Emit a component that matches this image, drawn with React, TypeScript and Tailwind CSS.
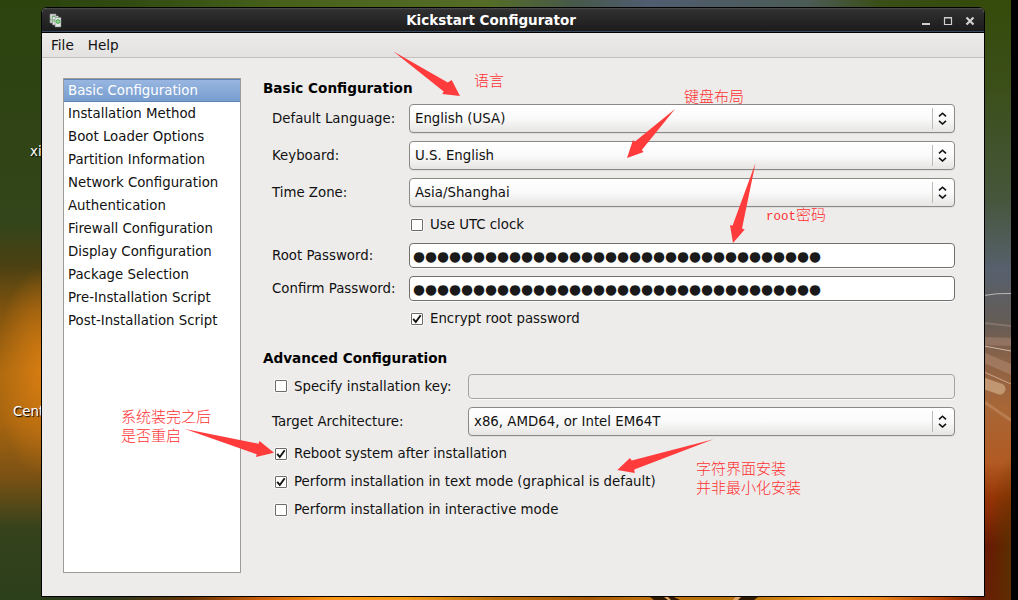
import type { ReactNode } from 'react';

const sections = [
  'Basic Configuration', 'Installation Method', 'Boot Loader Options', 'Partition Information',
  'Network Configuration', 'Authentication', 'Firewall Configuration', 'Display Configuration',
  'Package Selection', 'Pre-Installation Script', 'Post-Installation Script',
];

function Combo({ value }: { value: string }) {
  return (
    <div className="flex h-[29px] min-w-0 flex-1 items-center rounded-[4px] border border-[#8b8985] bg-linear-to-b from-white from-0% via-[#fafafa] via-50% to-[#e6e5e3] pl-[5px] shadow-[0_1px_0_#dedddb]">
      <span className="flex-1">{value}</span>
      <span className="flex h-[21px] w-[22px] items-center justify-center border-l border-[#bcbab7] pr-[2px]">
        <svg width="9" height="13" viewBox="0 0 9 13" fill="none" stroke="#111" strokeWidth="1.6">
          <path d="M1 4.3 4.5 1.2 8 4.3M1 8.9 4.5 12 8 8.9" />
        </svg>
      </span>
    </div>
  );
}

function Entry({ value = '', disabled = false }: { value?: string; disabled?: boolean }) {
  return (
    <div
      className={
        disabled
          ? 'flex h-[25px] flex-1 rounded-[4px] border border-[#a5a3a0] bg-[#edeceb] shadow-[0_1px_0_#fafafa]'
          : 'flex h-[25px] flex-1 items-center overflow-hidden rounded-[4px] border border-[#72706d] bg-white pt-[2px] pl-[3px] text-[13.75px] leading-[21px] text-[#1a1a1a] shadow-[0_1px_0_#fafafa]'
      }
    >
      {value}
    </div>
  );
}

function Check({ label, checked = false }: { label: string; checked?: boolean }) {
  return (
    <label className="flex h-5 items-center">
      <span className="mr-[7px] mb-px flex size-3 shrink-0 items-center justify-center rounded-[1px] border border-[#6d6b68] bg-white shadow-[0_0_0_1px_#f8f7f6]">
        {checked && (
          <svg width="10" height="10" viewBox="0 0 10 10" fill="none" stroke="#111" strokeWidth="1.9">
            <path d="M1.2 4.8 3.8 8 8.7 1.2" />
          </svg>
        )}
      </span>
      <span className="pb-px">{label}</span>
    </label>
  );
}

function Row({ label, children }: { label: string; children: ReactNode }) {
  return (
    <div className="flex items-center">
      <span className="w-[146px] shrink-0 pl-[9px]">{label}</span>
      {children}
    </div>
  );
}

function Wallpaper() {
  return (
    <svg className="absolute inset-0" width="1018" height="600">
      <defs>
        <linearGradient id="top">
          <stop offset="0" stopColor="#2c430e" />
          <stop offset=".12" stopColor="#304a12" />
          <stop offset=".28" stopColor="#47611b" />
          <stop offset=".48" stopColor="#556d26" />
          <stop offset=".57" stopColor="#47594b" />
          <stop offset=".64" stopColor="#505c70" />
          <stop offset=".8" stopColor="#4b5b55" />
          <stop offset=".87" stopColor="#3a4e17" />
          <stop offset="1" stopColor="#344909" />
        </linearGradient>
        <linearGradient id="left" x1="0" y1="0" x2="0" y2="1">
          <stop offset="0" stopColor="#2c430e" />
          <stop offset=".37" stopColor="#33451a" />
          <stop offset=".44" stopColor="#4a4012" />
          <stop offset=".52" stopColor="#82540e" />
          <stop offset=".62" stopColor="#ac690f" />
          <stop offset=".7" stopColor="#a8650f" />
          <stop offset=".8" stopColor="#775014" />
          <stop offset=".88" stopColor="#36431c" />
          <stop offset="1" stopColor="#2b3f1b" />
        </linearGradient>
        <radialGradient id="glow">
          <stop offset="0" stopColor="#d67c12" />
          <stop offset="1" stopColor="#d67c12" stopOpacity="0" />
        </radialGradient>
        <linearGradient id="right" x1="0" y1="0" x2="0" y2="1">
          <stop offset="0" stopColor="#354b0b" />
          <stop offset=".13" stopColor="#3a4e17" />
          <stop offset=".33" stopColor="#46563b" />
          <stop offset=".45" stopColor="#57606d" />
          <stop offset=".54" stopColor="#655c55" />
          <stop offset=".6" stopColor="#8b6348" />
          <stop offset=".68" stopColor="#a86636" />
          <stop offset=".77" stopColor="#b25b23" />
          <stop offset=".83" stopColor="#953405" />
          <stop offset=".91" stopColor="#681b02" />
          <stop offset="1" stopColor="#672003" />
        </linearGradient>
        <radialGradient id="shade">
          <stop offset="0" stopColor="#553600" stopOpacity=".8" />
          <stop offset="1" stopColor="#553600" stopOpacity="0" />
        </radialGradient>
        <linearGradient id="bottom" gradientUnits="userSpaceOnUse" x1="0" x2="1011" y1="0" y2="0">
          <stop offset="0" stopColor="#2b3f1b" />
          <stop offset=".11" stopColor="#2c391c" />
          <stop offset=".19" stopColor="#683406" />
          <stop offset=".26" stopColor="#d06009" />
          <stop offset=".33" stopColor="#fc9617" />
          <stop offset=".4" stopColor="#f49a1b" />
          <stop offset=".49" stopColor="#b96f0b" />
          <stop offset=".58" stopColor="#a85700" />
          <stop offset=".63" stopColor="#bd6e0a" />
          <stop offset=".74" stopColor="#b87307" />
          <stop offset=".82" stopColor="#f59922" />
          <stop offset=".87" stopColor="#eb841d" />
          <stop offset=".93" stopColor="#b64205" />
          <stop offset=".97" stopColor="#6c1b02" />
          <stop offset="1" stopColor="#643000" />
        </linearGradient>
      </defs>
      <rect width="1011" height="20" fill="url(#top)" />
      <rect width="60" height="600" fill="url(#left)" />
      <ellipse cx="42" cy="372" rx="46" ry="105" fill="url(#glow)" />
      <rect x="970" width="41" height="600" fill="url(#right)" />
      <ellipse cx="1013" cy="560" rx="24" ry="110" fill="url(#shade)" />
      <g fill="none">
        <path d="M984 295.5 Q996 293 1011 293.5" stroke="#b9bab5" strokeWidth="1" />
        <path d="M984 323 L1011 326" stroke="#a18c81" strokeWidth="2" opacity=".5" />
        <path d="M980 341 L1015 342" stroke="#b08b79" strokeWidth="8" opacity=".45" />
        <path d="M984 346 L1011 351" stroke="#d1b7a3" strokeWidth="1" />
        <path d="M980 356 L1015 371" stroke="#b8937b" strokeWidth="10" opacity=".45" />
        <path d="M984 372 L1011 384" stroke="#d8b7a0" strokeWidth="1" opacity=".8" />
        <path d="M980 382 L1000 389" stroke="#d8b893" strokeWidth="11" strokeLinecap="round" opacity=".6" />
        <path d="M980 399 L1015 423" stroke="#c38c62" strokeWidth="3" opacity=".6" />
      </g>
      <rect x="41" y="596" width="944" height="4" fill="url(#bottom)" />
      <path d="M650 597h24l6 3h-26zM734 597h24l-4 3h-16z" fill="#2f1901" />
      <path d="M664 597h4l3 3h-3zM735 597h6l-3 3h-5z" fill="#e2a869" />
      <rect x="1011" width="7" height="600" fill="#000" />
    </svg>
  );
}

function Arrows() {
  return (
    <svg className="pointer-events-none absolute inset-0" width="1018" height="600" fill="#ff3b3b">
      <path d="M393.5 51.5 447.8 82.5 451.7 80 460 96 442.3 94 443.7 91.5Z" />
      <path d="M675 109 641.8 150 643.7 152 627 158 633 140 634.8 141.8Z" />
      <path d="M755.5 163 742 228.4 744.7 229.5 733 243 730 225 732.5 225.8Z" />
      <path d="M185 429 258.5 443.7 259.5 441 274 452.7 256 457 256.7 454.3Z" />
      <path d="M713.5 439.3 634.3 469.5 634.7 473 617.3 470 630 458 631.7 460.5Z" />
    </svg>
  );
}

const note = "absolute whitespace-nowrap font-['Noto_Sans_CJK_SC',sans-serif] text-[15px] font-light leading-[19px] text-[#ff3030]";
const desktopLabel = 'absolute text-white [text-shadow:1px_1px_1px_#000]';

export default function App() {
  return (
    <main className="relative h-[600px] w-[1018px] overflow-hidden font-['DejaVu_Sans',sans-serif] text-[13.33px] leading-[19px] whitespace-nowrap text-[#111]">
      <Wallpaper />
      <span className={`${desktopLabel} top-[142px] left-[30px]`}>xi</span>
      <span className={`${desktopLabel} top-[402px] left-[13px]`}>Cent</span>

      <section className="absolute top-[7px] left-[41px] flex h-[590px] w-[944px] flex-col overflow-hidden rounded-t-[6px] border border-black bg-[#edeceb]">
        <header className="flex h-[25px] shrink-0 items-center border-b border-black bg-linear-to-b from-[#4d4d4d] from-0% via-[#303030] via-8% to-[#1b1b1b] shadow-[inset_0_-1px_0_#394b60]">
          <svg className="ml-[7px]" width="13" height="15" viewBox="0 0 13 15">
            <path d="M1 1h6v9H1z" fill="#d3d8d2" stroke="#8a8e89" strokeWidth=".6" />
            <path d="M3.5 3h6v9h-6z" fill="#e9ece8" stroke="#777c76" strokeWidth=".6" />
            <path d="M6 4.5h6V14H6z" fill="#e5e8e4" stroke="#777c76" strokeWidth=".6" />
            <path d="M3 3.5h3M2 5.5v2M5 6v3" stroke="#5cab61" strokeWidth="1" />
            <circle cx="9" cy="8.5" r="1.9" fill="#9ad39d" stroke="#42a64b" />
          </svg>
          <h1 className="flex-1 pr-[2px] text-center text-[13.5px] font-bold text-white">Kickstart Configurator</h1>
          <svg className="mt-[2px] mr-[9px]" width="53" height="10" viewBox="0 0 53 10" fill="none" stroke="#d0d0d0">
            <path d="M0 8h8" strokeWidth="2" />
            <path d="M22.5 1.5h7v7h-7zM22 2h8" strokeWidth="1.2" />
            <path d="m44.5 1.5 7 7M51.5 1.5l-7 7" strokeWidth="2.2" />
          </svg>
        </header>
        <nav className="flex h-[25px] shrink-0 items-center gap-[14px] border-b border-[#c0bfbd] bg-linear-to-b from-[#edeceb] to-[#e3e2e0] pl-[9px] text-[13.6px]">
          <span>File</span>
          <span>Help</span>
        </nav>
        <div className="flex flex-1 pt-5 pr-[29px] pb-[23px] pl-[21px]">
          <ul className="w-[178px] shrink-0 border border-[#9d9b98] bg-white">
            {sections.map((s, i) => (
              <li
                key={s}
                className={
                  i === 0
                    ? 'h-[23px] border-y border-[#5f83b5] bg-linear-to-b from-[#98b6e0] to-[#789dcf] pl-1 leading-[22px] text-white'
                    : 'h-[23px] pl-1 leading-[24px]'
                }
              >
                {s}
              </li>
            ))}
          </ul>

          <div className="ml-[22px] flex min-w-0 flex-1 flex-col gap-2">
            <h2 className="-mb-[2px] h-5 text-[13.6px] leading-[21px] font-bold text-black">Basic Configuration</h2>
            <Row label="Default Language:"><Combo value="English (USA)" /></Row>
            <Row label="Keyboard:"><Combo value="U.S. English" /></Row>
            <Row label="Time Zone:"><Combo value="Asia/Shanghai" /></Row>
            <div className="pl-[148px]"><Check label="Use UTC clock" /></div>
            <Row label="Root Password:"><Entry value={'●'.repeat(34)} /></Row>
            <Row label="Confirm Password:"><Entry value={'●'.repeat(34)} /></Row>
            <div className="pl-[148px]"><Check label="Encrypt root password" checked /></div>
            <h2 className="mt-[11px] -mb-[2px] h-5 text-[13.6px] leading-[21px] font-bold text-black">Advanced Configuration</h2>
            <div className="flex items-center">
              <div className="w-[205px] shrink-0 pl-3"><Check label="Specify installation key:" /></div>
              <Entry disabled />
            </div>
            <div className="flex items-center">
              <span className="w-[205px] shrink-0 pl-[9px]">Target Architecture:</span>
              <Combo value="x86, AMD64, or Intel EM64T" />
            </div>
            <div className="flex flex-col gap-2 pl-3">
              <Check label="Reboot system after installation" checked />
              <Check label="Perform installation in text mode (graphical is default)" checked />
              <Check label="Perform installation in interactive mode" />
            </div>
          </div>
        </div>
      </section>

      <Arrows />
      <p className={`${note} top-[70px] left-[474px]`}>语言</p>
      <p className={`${note} top-[86px] left-[684px]`}>键盘布局</p>
      <p className={`${note} top-[204px] left-[766px]`}>
        <span className="font-['Liberation_Mono',monospace] text-[12.5px]">root</span>密码
      </p>
      <p className={`${note} top-[406px] left-[121px]`}>系统装完之后<br />是否重启</p>
      <p className={`${note} top-[458px] left-[696px]`}>字符界面安装<br />并非最小化安装</p>
    </main>
  );
}
